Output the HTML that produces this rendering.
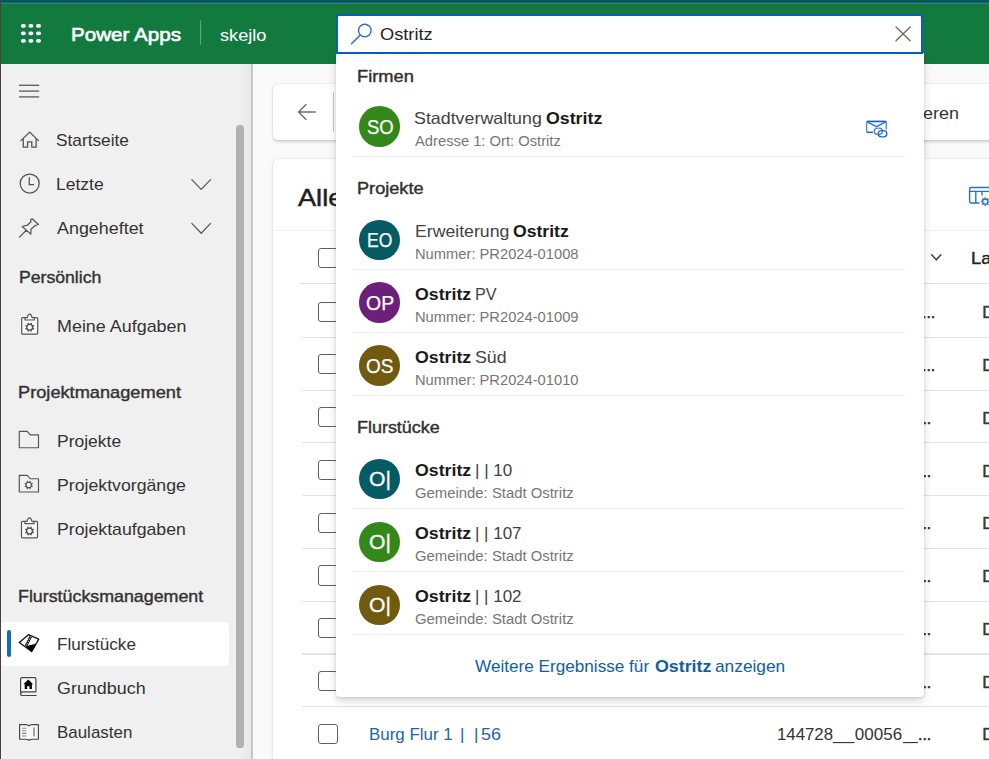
<!DOCTYPE html>
<html lang="de">
<head>
<meta charset="utf-8">
<title>Power Apps – Flurstücke</title>
<style>
*{box-sizing:border-box;margin:0;padding:0}
html,body{width:989px;height:759px;overflow:hidden;background:#fafafa;font-family:"Liberation Sans",Arial,sans-serif}
.abs{position:absolute}
.t{position:absolute;white-space:pre;line-height:1;transform-origin:0 0;font-family:"Liberation Sans",Arial,sans-serif}
#page{position:relative;width:989px;height:759px;overflow:hidden;background:#fafafa}
#topstrip{left:0;top:0;width:989px;height:4px;background:linear-gradient(#035a61 0,#035a61 1px,#02545d 1px,#02545d 2px,#16646f 2px,#16646f 3px,#357f74 3px,#357f74 4px)}
#header{left:0;top:3.6px;width:989px;height:60.65px;background:#137a3f}
#leftstrip{left:0;top:0;width:1.4px;height:759px;background:#4a3e42;z-index:50}
#sidebar{left:0;top:64px;width:252px;height:696px;background:#f0f0f0}
#sideedge{left:238px;top:64px;width:13px;height:696px;background:linear-gradient(90deg,#f0f0f0,#e8e8e8)}
#sideline{left:250.9px;top:64px;width:2.1px;height:696px;background:#c6c6c6}
#scroll{left:236.4px;top:124.5px;width:7.2px;height:623.5px;border-radius:3.6px;background:#b1b1b1}
#sel{left:1.4px;top:622.3px;width:227.6px;height:43.6px;background:#fff;border-radius:0 4px 4px 0}
#selbar{left:6.6px;top:630px;width:4.6px;height:26.6px;border-radius:2.3px;background:#0f6cbd}
.card{position:absolute;background:#fff;border-radius:5px}
#cmd{left:272.7px;top:83.6px;width:760px;height:56px;box-shadow:0 1.5px 3px rgba(0,0,0,.16),0 0 2px rgba(0,0,0,.10)}
#grid{left:272.7px;top:159px;width:760px;height:640px;box-shadow:0 0 2px rgba(0,0,0,.14),0 2px 4px rgba(0,0,0,.10)}
.hl{position:absolute;height:1.2px;background:#e3e3e3}
.cb{position:absolute;left:317.8px;width:20.2px;height:20.2px;border:1.4px solid #5f5f5f;border-radius:3px;background:#fff}
#search{left:335.7px;top:14px;width:587.5px;height:40px;background:#fff;border:2.2px solid #0b5cbf;border-radius:3px 3px 0 0}
#drop{left:335.7px;top:53.4px;width:588px;height:643.7px;background:#fff;border-radius:0 0 4px 4px;box-shadow:0 4px 10px rgba(0,0,0,.15),0 0.8px 2.5px rgba(0,0,0,.13)}
.sep{position:absolute;left:353.4px;width:552px;height:1.1px;background:#efefef}
.av{position:absolute;left:359.3px;width:40.6px;height:40.6px;border-radius:50%}
svg{position:absolute;overflow:visible}
</style>
</head>
<body>
<div id="page">
  <!-- main content behind -->
  <div class="card" id="cmd"></div>
  <div class="card" id="grid"></div>
  <div class="hl" style="left:272.7px;top:230.1px;width:720px;background:#f0f0f0"></div>
  <svg style="left:296px;top:103px" width="22" height="18" viewBox="0 0 22 18"><path d="M10 1.6 L2.6 9 L10 16.4 M2.8 9 H19.2" fill="none" stroke="#6a6a6a" stroke-width="1.35" stroke-linecap="round" stroke-linejoin="round"/></svg>
  <div class="abs" style="left:333px;top:92px;width:1.3px;height:40px;background:#c8c8c8"></div>
  <!-- table settings icon -->
  <svg style="left:0;top:0" width="989" height="759" viewBox="0 0 989 759"><path d="M979.5 203 H971 Q969.6 203 969.6 201.6 V188.9 Q969.6 187.5 971 187.5 H992 M969.6 191.4 H992 M975.8 191.4 V203 M982 191.4 V195.6" fill="none" stroke="#2672c8" stroke-width="1.4"/><circle cx="985.3" cy="201.6" r="2.6" fill="none" stroke="#2672c8" stroke-width="1.3"/><path d="M985.3 197.2 V198.6 M985.3 204.6 V206 M980.9 201.6 H982.3 M988.3 201.6 H989.7 M982.2 198.5 L983.2 199.5 M982.2 204.7 L983.2 203.7 M988.4 198.5 L987.4 199.5 M988.4 204.7 L987.4 203.7" stroke="#2672c8" stroke-width="1.5"/>
  <path d="M931.7 254.8 L936.3 259.8 L940.9 254.8" fill="none" stroke="#444" stroke-width="1.6" stroke-linecap="round" stroke-linejoin="round"/></svg>
<div class="hl" style="left:299.3px;top:282.6px;width:700px"></div>
  <div class="cb" style="top:301.5px"></div>
  <div class="hl" style="left:301.5px;top:336.8px;width:700px"></div>
  <div class="cb" style="top:354.3px"></div>
  <div class="hl" style="left:301.5px;top:389.5px;width:700px"></div>
  <div class="cb" style="top:407.0px"></div>
  <div class="hl" style="left:301.5px;top:442.3px;width:700px"></div>
  <div class="cb" style="top:459.8px"></div>
  <div class="hl" style="left:301.5px;top:495.1px;width:700px"></div>
  <div class="cb" style="top:512.6px"></div>
  <div class="hl" style="left:301.5px;top:547.9px;width:700px"></div>
  <div class="cb" style="top:565.4px"></div>
  <div class="hl" style="left:301.5px;top:600.6px;width:700px"></div>
  <div class="cb" style="top:618.1px"></div>
  <div class="hl" style="left:301.5px;top:653.4px;width:700px"></div>
  <div class="cb" style="top:670.9px"></div>
  <div class="hl" style="left:301.5px;top:706.2px;width:700px"></div>
  <div class="cb" style="top:723.7px"></div>
  <div class="cb" style="top:247.6px"></div>
<span class="t" style="left:297.63px;top:186px;font-size:24.5px;color:#1f1f1f;-webkit-text-stroke:0.5px #1f1f1f;transform:scaleX(1.1083);">Alle</span>
<span class="t" style="left:922.98px;top:105px;font-size:17px;color:#333;transform:scaleX(1.0568);">eren</span>
<span class="t" style="left:970.77px;top:250px;font-size:17px;color:#242424;-webkit-text-stroke:0.4px #242424;transform:scaleX(1.0734);">La</span>
<span class="t" style="left:922.03px;top:304px;font-size:17px;color:#2a2a2a;-webkit-text-stroke:0.5px #2a2a2a;transform:scaleX(0.9316);">...</span>
<span class="t" style="left:981.71px;top:304px;font-size:17px;color:#3a3a3a;-webkit-text-stroke:0.3px #3a3a3a;transform:scaleX(1.1215);">D</span>
<span class="t" style="left:922.03px;top:357px;font-size:17px;color:#2a2a2a;-webkit-text-stroke:0.5px #2a2a2a;transform:scaleX(0.9316);">...</span>
<span class="t" style="left:981.71px;top:357px;font-size:17px;color:#3a3a3a;-webkit-text-stroke:0.3px #3a3a3a;transform:scaleX(1.1215);">D</span>
<span class="t" style="left:917.53px;top:410px;font-size:17px;color:#2a2a2a;-webkit-text-stroke:0.5px #2a2a2a;transform:scaleX(0.9316);">...</span>
<span class="t" style="left:981.71px;top:410px;font-size:17px;color:#3a3a3a;-webkit-text-stroke:0.3px #3a3a3a;transform:scaleX(1.1215);">D</span>
<span class="t" style="left:917.53px;top:463px;font-size:17px;color:#2a2a2a;-webkit-text-stroke:0.5px #2a2a2a;transform:scaleX(0.9316);">...</span>
<span class="t" style="left:981.71px;top:463px;font-size:17px;color:#3a3a3a;-webkit-text-stroke:0.3px #3a3a3a;transform:scaleX(1.1215);">D</span>
<span class="t" style="left:917.53px;top:515px;font-size:17px;color:#2a2a2a;-webkit-text-stroke:0.5px #2a2a2a;transform:scaleX(0.9316);">...</span>
<span class="t" style="left:981.71px;top:515px;font-size:17px;color:#3a3a3a;-webkit-text-stroke:0.3px #3a3a3a;transform:scaleX(1.1215);">D</span>
<span class="t" style="left:917.53px;top:568px;font-size:17px;color:#2a2a2a;-webkit-text-stroke:0.5px #2a2a2a;transform:scaleX(0.9316);">...</span>
<span class="t" style="left:981.71px;top:568px;font-size:17px;color:#3a3a3a;-webkit-text-stroke:0.3px #3a3a3a;transform:scaleX(1.1215);">D</span>
<span class="t" style="left:917.53px;top:621px;font-size:17px;color:#2a2a2a;-webkit-text-stroke:0.5px #2a2a2a;transform:scaleX(0.9316);">...</span>
<span class="t" style="left:981.71px;top:621px;font-size:17px;color:#3a3a3a;-webkit-text-stroke:0.3px #3a3a3a;transform:scaleX(1.1215);">D</span>
<span class="t" style="left:917.53px;top:674px;font-size:17px;color:#2a2a2a;-webkit-text-stroke:0.5px #2a2a2a;transform:scaleX(0.9316);">...</span>
<span class="t" style="left:981.71px;top:674px;font-size:17px;color:#3a3a3a;-webkit-text-stroke:0.3px #3a3a3a;transform:scaleX(1.1215);">D</span>
<span class="t" style="left:981.71px;top:726px;font-size:17px;color:#3a3a3a;-webkit-text-stroke:0.3px #3a3a3a;transform:scaleX(1.1215);">D</span>
<span class="t" style="left:369.26px;top:726px;font-size:17px;color:#1f62ad;transform:scaleX(0.9952);">Burg Flur 1 </span>
<span class="t" style="left:460.05px;top:726px;font-size:17px;color:#1f62ad;">| </span>
<span class="t" style="left:473.95px;top:726px;font-size:17px;color:#1f62ad;">|</span>
<span class="t" style="left:481.38px;top:726px;font-size:17px;color:#1f62ad;transform:scaleX(1.0599);">56</span>
<span class="t" style="left:777.16px;top:726px;font-size:17px;color:#333;transform:scaleX(0.9872);">144728</span>
<span class="t" style="left:833.29px;top:726px;font-size:17px;color:#333;transform:scaleX(0.7526);">___</span>
<span class="t" style="left:854.85px;top:726px;font-size:17px;color:#333;">00056</span>
<span class="t" style="left:902.68px;top:726px;font-size:17px;color:#333;transform:scaleX(0.7807);">__</span>
<span class="t" style="left:917.53px;top:726px;font-size:17px;color:#2a2a2a;-webkit-text-stroke:0.5px #2a2a2a;transform:scaleX(0.9316);">...</span>

  <!-- sidebar -->
  <div class="abs" id="sidebar"></div>
  <div class="abs" id="sideedge"></div>
  <div class="abs" id="sideline"></div>
  <div class="abs" id="scroll"></div>
  <div class="abs" id="sel"></div>
  <div class="abs" id="selbar"></div>
  <svg style="left:0;top:0" width="989" height="759" viewBox="0 0 989 759"><rect x="19" y="84.65" width="20.2" height="1.3" fill="#5a5a5a"/><rect x="19" y="90.45" width="20.2" height="1.3" fill="#5a5a5a"/><rect x="19" y="96.25" width="20.2" height="1.3" fill="#5a5a5a"/><path d="M20.9 140.6 L29.7 132.1 L38.5 140.6 M23.3 138.6 V147.2 H27.6 V141.9 H31.8 V147.2 H36.1 V138.6" fill="none" stroke="#555" stroke-width="1.3" stroke-linejoin="miter" stroke-linecap="round"/><circle cx="29.7" cy="183.5" r="9.5" fill="none" stroke="#555" stroke-width="1.25"/><path d="M29.3 177.6 V184.5 H33.6" fill="none" stroke="#555" stroke-width="1.25" stroke-linecap="round"/><path d="M32.1 218.7 L38.5 224.5 L35.2 225.5 L31.0 229.3 L30.8 234.1 L22.1 226.5 L27.4 225.2 L30.9 221.8 L30.7 219.8 Z M26.3 230.3 L19.5 237.1" fill="none" stroke="#555" stroke-width="1.25" stroke-linejoin="round" stroke-linecap="round"/><path d="M191.8 179.6 L201.2 189.4 L210.6 179.6" fill="none" stroke="#5a5a5a" stroke-width="1.3" stroke-linecap="round" stroke-linejoin="round"/><path d="M191.8 223.4 L201.2 233.2 L210.6 223.4" fill="none" stroke="#5a5a5a" stroke-width="1.3" stroke-linecap="round" stroke-linejoin="round"/><path d="M25.0 317.6 H22.7 Q21.7 317.6 21.7 318.6 V333.2 Q21.7 334.2 22.7 334.2 H36.7 Q37.7 334.2 37.7 333.2 V318.6 Q37.7 317.6 36.7 317.6 H34.4" fill="#f9f9f9" stroke="#555" stroke-width="1.2"/><path d="M25.1 320.0 V317.6 H27.3 Q28.1 314.2 29.7 314.2 Q31.3 314.2 32.1 317.6 H34.3 V320.0 Z" fill="#f9f9f9" stroke="#555" stroke-width="1.2" stroke-linejoin="round"/><circle cx="29.7" cy="327.29999999999995" r="2.90" fill="#fafafa" stroke="#4a4a4a" stroke-width="1.25"/><path d="M32.75 328.56 L33.95 329.06 M30.96 330.35 L31.46 331.55 M28.44 330.35 L27.94 331.55 M26.65 328.56 L25.45 329.06 M26.65 326.04 L25.45 325.54 M28.44 324.25 L27.94 323.05 M30.96 324.25 L31.46 323.05 M32.75 326.04 L33.95 325.54 " stroke="#4a4a4a" stroke-width="1.50" fill="none"/><path d="M24.8 521.3 H22.5 Q21.5 521.3 21.5 522.3 V536.8 Q21.5 537.8 22.5 537.8 H36.5 Q37.5 537.8 37.5 536.8 V522.3 Q37.5 521.3 36.5 521.3 H34.2" fill="#f9f9f9" stroke="#555" stroke-width="1.2"/><path d="M24.9 523.7 V521.3 H27.1 Q27.9 517.9 29.5 517.9 Q31.1 517.9 31.9 521.3 H34.1 V523.7 Z" fill="#f9f9f9" stroke="#555" stroke-width="1.2" stroke-linejoin="round"/><circle cx="29.5" cy="530.95" r="2.90" fill="#fafafa" stroke="#4a4a4a" stroke-width="1.25"/><path d="M32.55 532.21 L33.75 532.71 M30.76 534.00 L31.26 535.20 M28.24 534.00 L27.74 535.20 M26.45 532.21 L25.25 532.71 M26.45 529.69 L25.25 529.19 M28.24 527.90 L27.74 526.70 M30.76 527.90 L31.26 526.70 M32.55 529.69 L33.75 529.19 " stroke="#4a4a4a" stroke-width="1.50" fill="none"/><path d="M19.3 431.4 H27.2 L30.2 434.8 H38.5 V447.7 H19.3 Z" fill="none" stroke="#555" stroke-width="1.15" stroke-linejoin="round"/><path d="M19.3 475.3 H27.2 L30.2 478.7 H38.5 V492.0 H19.3 Z" fill="none" stroke="#555" stroke-width="1.15" stroke-linejoin="round"/><circle cx="28.7" cy="485.0" r="2.70" fill="#fafafa" stroke="#4a4a4a" stroke-width="1.12"/><path d="M31.56 486.19 L32.58 486.61 M29.89 487.86 L30.31 488.88 M27.51 487.86 L27.09 488.88 M25.84 486.19 L24.82 486.61 M25.84 483.81 L24.82 483.39 M27.51 482.14 L27.09 481.12 M29.89 482.14 L30.31 481.12 M31.56 483.81 L32.58 483.39 " stroke="#4a4a4a" stroke-width="1.35" fill="none"/><path d="M28.4 634.7 L19.3 642.6 L31.6 651.6 L38.8 639.2 Z" fill="#fff" stroke="#111" stroke-width="1.3" stroke-linejoin="round"/><path d="M31.0 636.2 L25.4 647.0" fill="none" stroke="#111" stroke-width="2.6"/><path d="M31.0 636.2 L25.4 647.0" fill="none" stroke="#fff" stroke-width="0.9" stroke-dasharray="1.4 1.2"/><path d="M26.2 646.6 L35.6 644.4 L31.6 651.4 Z" fill="#000" stroke="#000" stroke-width="1" stroke-linejoin="round"/><path d="M20.6 693.9 V679.2 Q20.6 677.7 22.1 677.7 H34.4 Q35.9 677.7 35.9 679.2 V691.8 H22.7 Q20.6 691.8 20.6 693.7 Q20.6 695.5 22.7 695.5 H36.2" fill="#fbfbfb" stroke="#444" stroke-width="1.2" stroke-linejoin="round" stroke-linecap="round"/><path d="M28.3 679.6 L33.2 684.3 H31.9 V689 H29.5 V686.2 H27.1 V689 H24.7 V684.3 H23.4 Z" fill="#000"/><path d="M19.6 724.6 H25.5 Q28.2 724.6 29 726 Q29.8 724.6 32.5 724.6 H38.4 V739.2 H32.8 Q29.9 739.2 29 740.4 Q28.1 739.2 25.2 739.2 H19.6 Z" fill="#f8f8f8" stroke="#444" stroke-width="1.15" stroke-linejoin="round"/><path d="M22 728.2 H26.4 M22 730.8 H26.4 M22 733.4 H26.4 M22 736 H26.4" stroke="#8a8a8a" stroke-width="1.1"/><path d="M34 727.6 V736.4" stroke="#9a9a9a" stroke-width="1.8"/></svg>
<span class="t" style="left:56.43px;top:132px;font-size:17px;color:#333333;transform:scaleX(1.0158);">Startseite</span>
<span class="t" style="left:56.42px;top:176px;font-size:17px;color:#333333;transform:scaleX(1.0291);">Letzte</span>
<span class="t" style="left:57.44px;top:220px;font-size:17px;color:#333333;transform:scaleX(1.0526);">Angeheftet</span>
<span class="t" style="left:18.51px;top:269px;font-size:17px;color:#333333;-webkit-text-stroke:0.4px #333333;transform:scaleX(1.0373);">Persönlich</span>
<span class="t" style="left:56.79px;top:318px;font-size:17px;color:#333333;transform:scaleX(1.0539);">Meine Aufgaben</span>
<span class="t" style="left:18.47px;top:384px;font-size:17px;color:#333333;-webkit-text-stroke:0.4px #333333;transform:scaleX(1.0710);">Projektmanagement</span>
<span class="t" style="left:56.82px;top:433px;font-size:17px;color:#333333;transform:scaleX(1.0280);">Projekte</span>
<span class="t" style="left:56.80px;top:477px;font-size:17px;color:#333333;transform:scaleX(1.0411);">Projektvorgänge</span>
<span class="t" style="left:56.80px;top:521px;font-size:17px;color:#333333;transform:scaleX(1.0411);">Projektaufgaben</span>
<span class="t" style="left:18.29px;top:588px;font-size:17px;color:#333333;-webkit-text-stroke:0.4px #333333;transform:scaleX(1.0484);">Flurstücksmanagement</span>
<span class="t" style="left:56.64px;top:636px;font-size:17px;color:#333333;transform:scaleX(1.0065);">Flurstücke</span>
<span class="t" style="left:56.59px;top:680px;font-size:17px;color:#333333;transform:scaleX(1.0539);">Grundbuch</span>
<span class="t" style="left:56.65px;top:724px;font-size:17px;color:#333333;transform:scaleX(0.9959);">Baulasten</span>

  <!-- header -->
  <div class="abs" id="header"></div>
  <div class="abs" id="topstrip"></div>
  <svg style="left:0;top:0" width="989" height="759" viewBox="0 0 989 759"><rect x="20.95" y="23.9" width="4.9" height="3.8" rx="1.8" fill="#fff"/><rect x="28.45" y="23.9" width="4.9" height="3.8" rx="1.8" fill="#fff"/><rect x="36.05" y="23.9" width="4.9" height="3.8" rx="1.8" fill="#fff"/><rect x="20.95" y="31.4" width="4.9" height="3.8" rx="1.8" fill="#fff"/><rect x="28.45" y="31.4" width="4.9" height="3.8" rx="1.8" fill="#fff"/><rect x="36.05" y="31.4" width="4.9" height="3.8" rx="1.8" fill="#fff"/><rect x="20.95" y="38.9" width="4.9" height="3.8" rx="1.8" fill="#fff"/><rect x="28.45" y="38.9" width="4.9" height="3.8" rx="1.8" fill="#fff"/><rect x="36.05" y="38.9" width="4.9" height="3.8" rx="1.8" fill="#fff"/><rect x="200" y="20.4" width="1.1" height="24.3" fill="#5fa57c"/></svg>

  <!-- dropdown -->
  <div class="abs" id="drop"></div>
  <div class="sep" style="top:156.0px"></div>
  <div class="sep" style="top:269.0px"></div>
  <div class="sep" style="top:332.0px"></div>
  <div class="sep" style="top:395.0px"></div>
  <div class="sep" style="top:508.0px"></div>
  <div class="sep" style="top:571.0px"></div>
  <div class="sep" style="top:634.0px"></div>
  <div class="av" style="top:106.4px;background:#34881a"></div>
  <div class="av" style="top:219.9px;background:#055b62"></div>
  <div class="av" style="top:282.4px;background:#6c1f7b"></div>
  <div class="av" style="top:345.2px;background:#725910"></div>
  <div class="av" style="top:458.5px;background:#055b62"></div>
  <div class="av" style="top:521.5px;background:#34881a"></div>
  <div class="av" style="top:584.5px;background:#725910"></div>
<span class="t" style="left:357.07px;top:69px;font-size:15.8px;color:#323130;-webkit-text-stroke:0.4px #323130;transform:scaleX(1.1585);">Firmen</span>
<span class="t" style="left:356.88px;top:181px;font-size:15.8px;color:#323130;-webkit-text-stroke:0.4px #323130;transform:scaleX(1.1481);">Projekte</span>
<span class="t" style="left:356.89px;top:420px;font-size:15.8px;color:#323130;-webkit-text-stroke:0.4px #323130;transform:scaleX(1.1358);">Flurstücke</span>
<span class="t" style="left:414.36px;top:110px;font-size:16.5px;color:#424242;transform:scaleX(1.0804);">Stadtverwaltung </span>
<span class="t" style="left:545.66px;top:110px;font-size:16.5px;color:#1b1a19;font-weight:700;transform:scaleX(1.0769);">Ostritz</span>
<span class="t" style="left:414.84px;top:134px;font-size:14px;color:#767676;transform:scaleX(1.0530);">Adresse 1: Ort: Ostritz</span>
<span class="t" style="left:414.57px;top:223px;font-size:16.5px;color:#424242;transform:scaleX(1.0712);">Erweiterung </span>
<span class="t" style="left:512.77px;top:223px;font-size:16.5px;color:#1b1a19;font-weight:700;transform:scaleX(1.0671);">Ostritz</span>
<span class="t" style="left:414.59px;top:247px;font-size:14px;color:#767676;transform:scaleX(1.0507);">Nummer: PR2024-01008</span>
<span class="t" style="left:414.56px;top:286px;font-size:16.5px;color:#1b1a19;font-weight:700;transform:scaleX(1.0750);">Ostritz </span>
<span class="t" style="left:474.97px;top:286px;font-size:16.5px;color:#424242;transform:scaleX(0.9807);">PV</span>
<span class="t" style="left:414.59px;top:310px;font-size:14px;color:#767676;transform:scaleX(1.0507);">Nummer: PR2024-01009</span>
<span class="t" style="left:414.56px;top:349px;font-size:16.5px;color:#1b1a19;font-weight:700;transform:scaleX(1.0750);">Ostritz </span>
<span class="t" style="left:474.86px;top:349px;font-size:16.5px;color:#424242;transform:scaleX(1.0749);">Süd</span>
<span class="t" style="left:414.59px;top:373px;font-size:14px;color:#767676;transform:scaleX(1.0507);">Nummer: PR2024-01010</span>
<span class="t" style="left:414.56px;top:462px;font-size:16.5px;color:#1b1a19;font-weight:700;transform:scaleX(1.0750);">Ostritz </span>
<span class="t" style="left:475.41px;top:462px;font-size:16.5px;color:#424242;transform:scaleX(1.0317);">| | 10</span>
<span class="t" style="left:414.58px;top:486px;font-size:14px;color:#767676;transform:scaleX(1.0623);">Gemeinde: Stadt Ostritz</span>
<span class="t" style="left:414.56px;top:525px;font-size:16.5px;color:#1b1a19;font-weight:700;transform:scaleX(1.0750);">Ostritz </span>
<span class="t" style="left:475.42px;top:525px;font-size:16.5px;color:#424242;transform:scaleX(1.0275);">| | 107</span>
<span class="t" style="left:414.58px;top:549px;font-size:14px;color:#767676;transform:scaleX(1.0623);">Gemeinde: Stadt Ostritz</span>
<span class="t" style="left:414.56px;top:588px;font-size:16.5px;color:#1b1a19;font-weight:700;transform:scaleX(1.0750);">Ostritz </span>
<span class="t" style="left:475.42px;top:588px;font-size:16.5px;color:#424242;transform:scaleX(1.0275);">| | 102</span>
<span class="t" style="left:414.58px;top:612px;font-size:14px;color:#767676;transform:scaleX(1.0623);">Gemeinde: Stadt Ostritz</span>
<span class="t" style="left:475.25px;top:658px;font-size:17px;color:#115ea3;transform:scaleX(1.0087);">Weitere Ergebnisse für </span>
<span class="t" style="left:655.20px;top:658px;font-size:17px;color:#115ea3;font-weight:700;transform:scaleX(1.0464);">Ostritz </span>
<span class="t" style="left:714.73px;top:658px;font-size:17px;color:#115ea3;transform:scaleX(1.0180);">anzeigen</span>
<span class="t" style="left:366.74px;top:117px;font-size:20px;color:#ffffff;-webkit-text-stroke:0.25px #ffffff;transform:scaleX(0.9251);">SO</span>
<span class="t" style="left:367.49px;top:230px;font-size:20px;color:#ffffff;-webkit-text-stroke:0.25px #ffffff;transform:scaleX(0.8764);">EO</span>
<span class="t" style="left:366.08px;top:293px;font-size:20px;color:#ffffff;-webkit-text-stroke:0.25px #ffffff;transform:scaleX(0.9738);">OP</span>
<span class="t" style="left:366.41px;top:356px;font-size:20px;color:#ffffff;-webkit-text-stroke:0.25px #ffffff;transform:scaleX(0.9513);">OS</span>
<span class="t" style="left:369.49px;top:469px;font-size:20px;color:#ffffff;-webkit-text-stroke:0.3px #ffffff;transform:scaleX(1.0565);">O|</span>
<span class="t" style="left:369.49px;top:532px;font-size:20px;color:#ffffff;-webkit-text-stroke:0.3px #ffffff;transform:scaleX(1.0565);">O|</span>
<span class="t" style="left:369.49px;top:595px;font-size:20px;color:#ffffff;-webkit-text-stroke:0.3px #ffffff;transform:scaleX(1.0565);">O|</span>
  <svg style="left:0;top:0" width="989" height="759" viewBox="0 0 989 759"><path d="M872.8 132.4 H867.7 Q866.7 132.4 866.7 131.4 V122.4 Q866.7 121.4 867.7 121.4 H885.3 Q886.3 121.4 886.3 122.4 V129.4" fill="none" stroke="#4a8ad6" stroke-width="1.3" stroke-linejoin="round"/><path d="M866.9 121.5 H886.1" stroke="#0f5fc0" stroke-width="1.5"/><path d="M867.2 121.8 L876.5 126.6 L885.8 121.8" fill="none" stroke="#2a72cc" stroke-width="1.3" stroke-linejoin="round"/><path d="M867 132.4 H872.8" stroke="#1a66c4" stroke-width="1.4"/><rect x="874.2" y="128.2" width="8.2" height="6.2" rx="3.1" fill="none" stroke="#3f84d4" stroke-width="1.3"/><rect x="878.2" y="130.6" width="8.6" height="6.3" rx="3.1" fill="none" stroke="#1f6cc8" stroke-width="1.4"/></svg>
  <div class="abs" id="search"></div>
  <svg style="left:0;top:0" width="989" height="759" viewBox="0 0 989 759"><circle cx="364.8" cy="30.5" r="6.3" fill="none" stroke="#2f6dc9" stroke-width="1.4"/><path d="M360.2 35.1 L351.6 43.6" stroke="#4a6fc0" stroke-width="1.5" stroke-linecap="round"/><path d="M896 27 L910.2 40.8 M910.2 27 L896 40.8" stroke="#6b6764" stroke-width="1.3" stroke-linecap="round"/></svg>
<span class="t" style="left:70.95px;top:25px;font-size:19px;color:#ffffff;-webkit-text-stroke:0.6px #ffffff;transform:scaleX(1.0843);">Power Apps</span>
<span class="t" style="left:220.17px;top:27px;font-size:17px;color:#ffffff;transform:scaleX(1.0695);">skejlo</span>
<span class="t" style="left:379.57px;top:26px;font-size:17px;color:#242424;transform:scaleX(1.0728);">Ostritz</span>
  <div class="abs" id="leftstrip"></div>
</div>
</body>
</html>
